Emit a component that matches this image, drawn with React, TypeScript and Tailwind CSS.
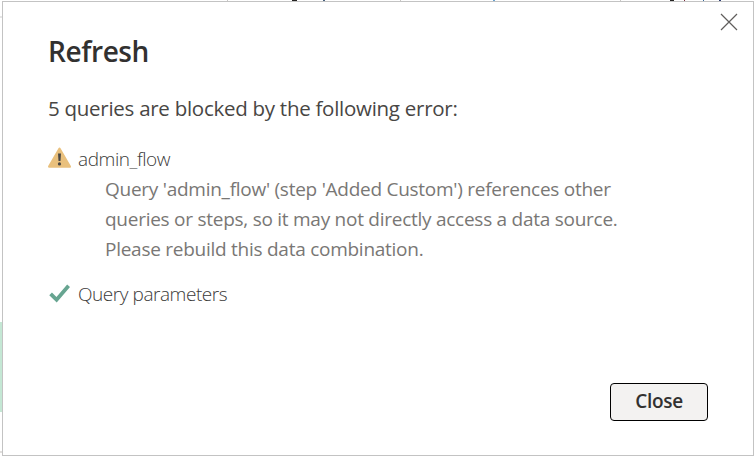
import React from "react";

function WarningIcon() {
  return (
    <svg className="mb-[3px] block h-[22px] w-[24px] shrink-0" viewBox="0 0 24 22">
      <path d="M11.5 1.8 L21.8 19.6 H1.2 Z" fill="#e9c07d" stroke="#e9c07d" strokeWidth="2.4" strokeLinejoin="round" />
      <path d="M10 6.4 H13 L12.5 14 H10.5 Z" fill="#484644" />
      <circle cx="11.5" cy="16.9" r="1.6" fill="#484644" />
    </svg>
  );
}

function CheckIcon() {
  return (
    <svg className="mb-px block h-[20px] w-[22px] shrink-0" viewBox="0 0 22 20">
      <path d="M2.6 9.8 L8.6 15.8 L20.6 1.8" fill="none" stroke="#67a591" strokeWidth="3.8" />
    </svg>
  );
}

function DismissIcon() {
  return (
    <svg className="block size-[18px]" viewBox="0 0 18 18">
      <path d="M1 1 L17 17 M17 1 L1 17" fill="none" stroke="#605e5c" strokeWidth="1.2" />
    </svg>
  );
}

/* Sliver of the query grid that shows above the dialog. */
function GridEdge() {
  return (
    <div className="flex h-px bg-white">
      <div className="ml-[227px] w-px bg-[#c8c6c4]" />
      <div className="ml-[64px] w-[5px] bg-[#252423]" />
      <div className="ml-[26px] w-[2px] bg-[#49617e]" />
      <div className="ml-[75px] w-px bg-[#c8c6c4]" />
      <div className="ml-[92px] w-[2px] bg-[#6aa2cf]" />
      <div className="ml-[125px] w-px bg-[#c8c6c4]" />
      <div className="ml-[49px] w-[4px] bg-[#252423]" />
      <div className="ml-[10px] w-px bg-[#7a2c3c]" />
      <div className="ml-[18px] w-px bg-[#35679a]" />
      <div className="ml-[15px] w-[2px] bg-[#2f3f74]" />
    </div>
  );
}

function App() {
  return (
    <div className="flex h-[456px] w-[755px] flex-col overflow-hidden bg-white font-['Open_Sans','Noto_Sans',sans-serif]">
      <GridEdge />
      <div className="flex h-[455px]">
        <div className="flex w-[2px] shrink-0 flex-col">
          <div className="mt-[15px] h-[2px] bg-[#e6e6e6]" />
          <div className="mt-[304px] h-[90px] bg-[#c4e7d4]" />
          <div className="mt-[39px] h-[2px] bg-[#e1dfdd]" />
        </div>
        <main className="flex w-[752px] flex-col border border-[#c3c3c3] bg-white">
          <div className="flex h-[30px] shrink-0 justify-end pt-[11px] pr-[15px]">
            <button aria-label="Dismiss" className="size-[18px]">
              <DismissIcon />
            </button>
          </div>
          <div className="flex flex-col pl-[45px]">
            <h1 className="h-[40px] text-[28px] leading-[38px] font-semibold tracking-[-0.4px] whitespace-nowrap text-[#323130]">Refresh</h1>
            <p className="mt-[21px] h-[31px] text-[20.5px] leading-[30px] tracking-[-0.27px] whitespace-nowrap text-[#484644]">
              5 queries are blocked by the following error:
            </p>
            <div className="mt-[20px] flex h-[30px] items-center">
              <WarningIcon />
              <span className="ml-[6px] text-[19px] leading-[30px] font-light tracking-[-0.42px] whitespace-nowrap text-[#3b3a39]">admin_flow</span>
            </div>
            <div className="pl-[57px] text-[19px] leading-[30px] tracking-[-0.26px] whitespace-nowrap text-[#797775]">
              <p>Query 'admin_flow' (step 'Added Custom') references other</p>
              <p>queries or steps, so it may not directly access a data source.</p>
              <p>Please rebuild this data combination.</p>
            </div>
            <div className="mt-[15px] flex h-[30px] items-center">
              <CheckIcon />
              <span className="ml-[8px] text-[19px] leading-[30px] font-light tracking-[-0.45px] whitespace-nowrap text-[#3b3a39]">Query parameters</span>
            </div>
          </div>
          <div className="mt-auto flex justify-end pr-[45px] pb-[34px]">
            <button className="flex h-[38px] w-[98px] justify-center rounded-[4px] border border-black bg-[#f3f2f1] text-[19px] leading-[34px] font-semibold tracking-[-0.3px] text-[#323130]">
              Close
            </button>
          </div>
        </main>
      </div>
    </div>
  );
}

export default App;
